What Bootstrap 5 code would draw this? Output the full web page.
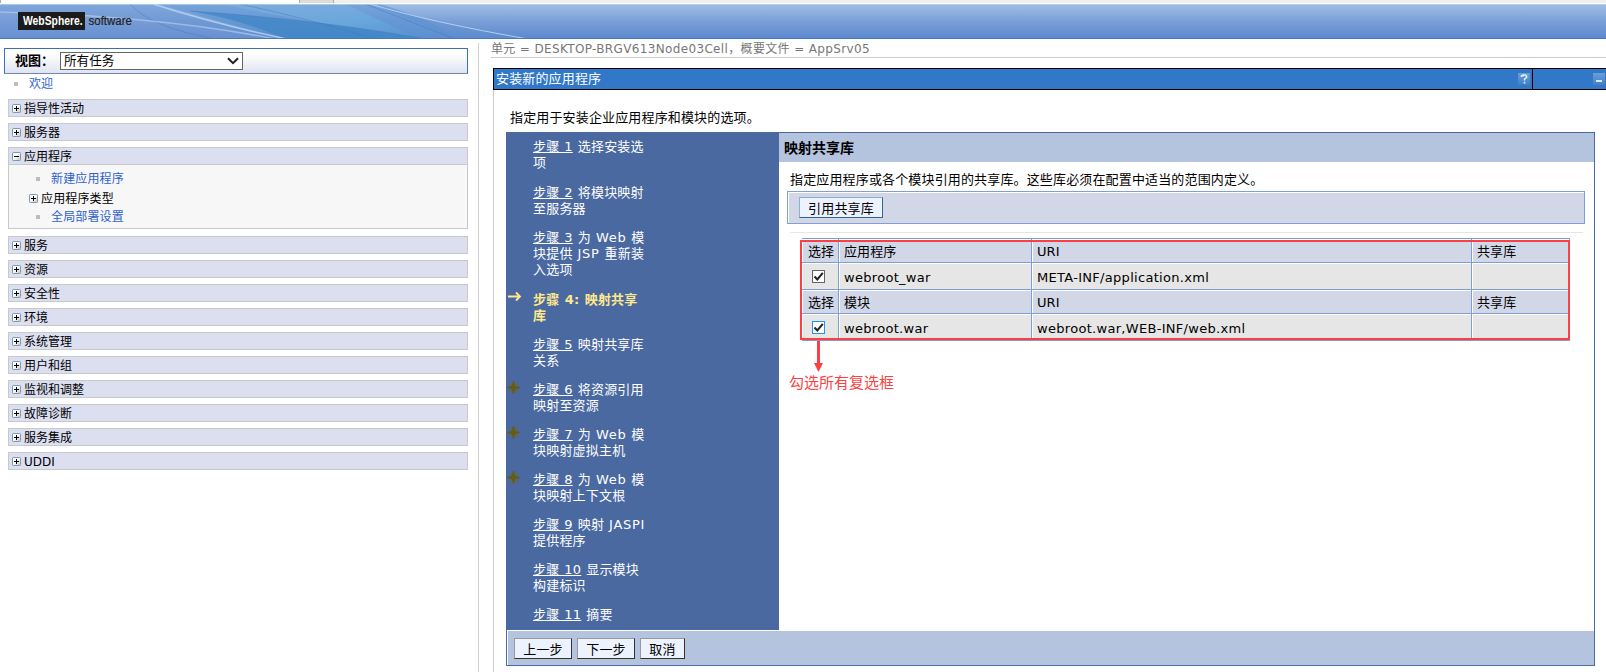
<!DOCTYPE html>
<html lang="zh-CN">
<head>
  <meta charset="UTF-8" />
  <meta name="viewport" content="width=device-width, initial-scale=1.0"/>
  <title>WebSphere software</title>

  <!-- Bootstrap CSS -->
  <link
    href="https://cdn.jsdelivr.net/npm/bootstrap@5.3.0/dist/css/bootstrap.min.css"
    rel="stylesheet"
  />

  <style>
    /* Global styling & layout */
    body {
      font-family: "DejaVu Sans", "Noto Sans CJK SC", sans-serif;
      font-size: 12.6px;
      line-height: 16px;
      color: #000;
      background: #fff;
      height: 672px;
      overflow: hidden;
    }
    svg {
      display: block;
      flex: none;
    }

    /* Browser tab strip */
    .tab-strip {
      height: 3px;
      background: #efefef;
    }
    .tab-active {
      width: 300px;
      background: #fff;
      border-left: 1px solid #aaa;
      border-right: 1px solid #aaa;
    }
    .tab-next {
      width: 34px;
      background: #dcdcdc;
      border-right: 1px solid #aaa;
    }

    /* Product banner */
    .banner {
      height: 35px;
      margin-top: 1px;
    }

    /* Columns below the banner fill the rest of the window */
    .columns {
      height: 633px;
    }

    /* Navigation tree */
    .side {
      width: 479px;
      margin-top: 4px;
      padding: 5px 10px 0 4px;
      border-right: 1px solid #d0d0d0;
      font-size: 12px;
    }
    .view-box {
      height: 26px;
      padding-left: 10px;
      border: 1px solid #3a6fb0;
      border-bottom-color: #7189b0;
      background: linear-gradient(#fff 20%, #e0e3f2);
    }
    .view-label {
      width: 45px;
      font-size: 13px;
      font-weight: 700;
      white-space: nowrap;
    }
    .view-select {
      width: 183px;
      height: 18px;
      padding: 0 3px;
      border: 1px solid #666;
      background: #fff;
      font-size: 12.6px;
    }
    .side a {
      color: #2f62cc;
    }
    .dot {
      width: 4px;
      height: 4px;
      background: #bcbcbc;
      flex: none;
    }
    .welcome {
      height: 19px;
      padding-left: 10px;
      gap: 11px;
    }
    .tree {
      margin: 6px 0 0 4px;
    }
    .tree-item {
      height: 18px;
      padding: 1px 0 0 3px;
      gap: 3px;
      margin-bottom: 6px;
      border: 1px solid #c9c9cc;
      background: #dcdff0;
    }
    .tree-item svg {
      margin-top: -1px;
    }
    .tree-body {
      height: 64px;
      margin: -6px 0 7px;
      padding: 4px 0 0 20px;
      border: 1px solid #c9c9cc;
      border-top: 0;
      background: #f7f7f7;
      letter-spacing: 0.15px;
    }
    .tree-leaf {
      height: 19px;
      gap: 11px;
      padding-left: 7px;
    }
    .tree-leaf.branch {
      gap: 3px;
      padding: 2px 0 0;
    }

    /* Work area */
    .work {
      padding-left: 12px;
    }
    .crumb {
      height: 19px;
      padding-top: 3px;
      line-height: 15px;
      color: #777;
      font-size: 12px;
      letter-spacing: 0.35px;
      border-bottom: 1px solid #ccc;
    }
    .portlet {
      height: 605px;
      margin: 10px 0 0 2px;
      border-left: 1px solid #ccc;
    }
    .portlet-title {
      height: 22px;
      margin-left: -1px;
      border: 1px solid #000;
      border-right: 0;
      background: #3178c8;
      color: #fff;
      font-size: 13px;
      letter-spacing: 0.15px;
      padding-left: 2px;
    }
    .help-btn {
      margin-right: 2px;
    }
    .title-end {
      width: 74px;
      border-left: 1px solid #000;
    }
    .intro {
      height: 42px;
      padding: 20px 0 0 16px;
      font-size: 13px;
      letter-spacing: 0.15px;
    }

    /* Wizard */
    .wizard {
      width: 1089px;
      height: 534px;
      margin-left: 12px;
      border: 1px solid #4a69a1;
    }
    .steps {
      width: 272px;
      padding: 6px 0 0;
      background: #4a69a1;
      color: #fff;
      font-size: 13px;
      letter-spacing: 0.2px;
      word-spacing: 0.6px;
    }
    .step {
      margin-bottom: 13px;
      white-space: nowrap;
    }
    .step:first-child,
    .step:nth-child(3) {
      margin-bottom: 14px;
    }
    .step-icon {
      width: 26px;
      margin-top: -1px;
      flex: none;
    }
    .step a {
      color: #fff;
      text-decoration: underline;
    }
    .step b {
      color: #ffe88c;
    }
    .latin {
      letter-spacing: 0.7px;
    }
    .panel-title {
      height: 29px;
      padding: 1px 0 0 5px;
      background: #b4c4de;
      font-size: 14px;
      font-weight: 700;
    }
    .panel-text {
      height: 29px;
      padding: 10px 0 0 11px;
      font-size: 13px;
      letter-spacing: 0.15px;
    }
    .tool-row {
      height: 33px;
      width: 798px;
      margin-left: 8px;
      padding-left: 11px;
      border: 1px solid #829fd5;
      background: #d1d7e7;
      box-shadow: inset 1px 1px #fff;
    }
    .was-btn {
      width: 58px;
      height: 21px;
      padding: 1px 0 0;
      border: 1px solid #999;
      border-right-color: #333;
      border-bottom-color: #333;
      background: #edf2ff;
      color: #000;
      font-size: 13px;
      letter-spacing: 0.2px;
      line-height: 17px;
      white-space: nowrap;
    }
    .was-btn.narrow {
      width: 45px;
    }
    .was-btn.blue {
      width: 84px;
      border-color: #8bb0d8 #336699 #336699 #8bb0d8;
    }
    .rule {
      height: 1px;
      margin: 8px 11px 5px;
      background: #e6e6e6;
    }
    .map-area {
      width: 768px;
      margin-left: 23px;
    }
    .map-table {
      width: 768px;
      table-layout: fixed;
      border-collapse: separate;
      border-spacing: 0;
      border-top: 1px solid #7f9fd4;
      font-size: 13px;
    }
    .map-table td,
    .map-table th {
      padding: 3px 0 0 5px;
      height: 27px;
      border-right: 1px solid #7f9fd4;
      border-bottom: 1px solid #7f9fd4;
      background: #e6e6e6;
      box-shadow: inset 1px 1px #fff;
      font-weight: 400;
      letter-spacing: 0.3px;
      white-space: nowrap;
    }
    .map-table th {
      height: 24px;
      background: #d1d7e7;
      letter-spacing: 0.1px;
    }
    .map-table th:first-child {
      padding-left: 6px;
    }
    .tick {
      width: 13px;
      height: 13px;
      margin: -2px 0 0 5px;
      border: 1px solid #666;
      background: #fff;
    }
    .tick.focus {
      border-color: #1c97ea;
    }
    /* Annotation drawn over the table */
    .callout {
      position: absolute;
      left: -2px;
      top: 2px;
      width: 770px;
      height: 100px;
      border: 2px solid #fb3f43;
    }
    .callout-text {
      margin: 1px 0 0 -13px;
      color: #fb3f43;
      font-size: 15px;
      line-height: 20px;
    }
    .wizard-foot {
      height: 35px;
      padding: 2px 0 0 7px;
      gap: 5px;
      background: #b4c4de;
      box-shadow: inset 1px 1px #fff;
    }
  </style>
</head>
<body>
  <svg width="0" height="0" class="position-absolute">
    <defs>
      <linearGradient id="box" x1="0" y1="0" x2="1" y2="1">
        <stop offset=".4" stop-color="#fff"/><stop offset="1" stop-color="#c8c4b8"/>
      </linearGradient>
      <linearGradient id="btn" x1="0" y1="0" x2="0" y2="1">
        <stop offset="0" stop-color="#6a9fd8"/><stop offset="1" stop-color="#3f80c6"/>
      </linearGradient>
      <symbol id="plus" viewBox="0 0 9 9">
        <rect x=".5" y=".5" width="8" height="8" rx=".8" fill="url(#box)" stroke="#7898b5"/>
        <path d="M2 4.5h5M4.5 2v5" stroke="#000"/>
      </symbol>
      <symbol id="minus" viewBox="0 0 9 9">
        <rect x=".5" y=".5" width="8" height="8" rx=".8" fill="url(#box)" stroke="#7898b5"/>
        <path d="M2 4.5h5" stroke="#000"/>
      </symbol>
      <symbol id="check" viewBox="0 0 11 11">
        <path d="M1.5 5.5 4.3 8.4 9.8 1.8" fill="none" stroke="#222" stroke-width="2"/>
      </symbol>
      <symbol id="star" viewBox="0 0 13 13">
        <path d="M2 2h2v2H2zM9 2h2v2H9zM2 9h2v2H2zM9 9h2v2H9z" fill="#66664c"/>
        <path d="M6 0h1l1 4 1 1 4 1v1L9 8 8 9l-1 4H6L5 9 4 8 0 7V6l4-1 1-1z" fill="#665c12"/>
      </symbol>
    </defs>
  </svg>

  <!-- Tab strip -->
  <div class="tab-strip d-flex">
    <div class="tab-active"></div>
    <div class="tab-next"></div>
  </div>

  <!-- Banner -->
  <header class="banner">
    <svg width="1606" height="35" viewBox="0 0 1606 35">
      <defs>
        <linearGradient id="sky" x1="0" y1="0" x2="0" y2="1">
          <stop offset="0" stop-color="#a0bfe7"/><stop offset=".5" stop-color="#7a9fd7"/><stop offset="1" stop-color="#5a89ce"/>
        </linearGradient>
        <linearGradient id="glow" x1="0" y1="0" x2="1" y2="1">
          <stop offset="0" stop-color="#8fb9e2" stop-opacity=".3"/><stop offset=".6" stop-color="#69aadd"/><stop offset="1" stop-color="#5b93d2"/>
        </linearGradient>
      </defs>
      <rect width="1606" height="35" fill="url(#sky)"/>
      <path d="M0 8Q150 12 285 35H0z" fill="#7398d5" opacity=".5"/>
      <path d="M0 0H155L275 35Q140 9 0 8z" fill="#6794d1" opacity=".55"/>
      <path d="M155 0H380Q440 18 455 35H287Z" fill="#5a93d2" opacity=".6"/>
      <path d="M220 0H345L415 33Q330 22 220 0z" fill="url(#glow)" opacity=".85"/>
      <path d="M190 7Q320 16 420 34L375 35H285Q240 15 190 7z" fill="#3c84c5" opacity=".7"/>
      <path d="M370 0Q430 18 530 35H455Q420 18 370 0z" fill="#5f8fd0" opacity=".4"/>
      <path d="M190 7Q320 16 420 34M365 0 455 35M240 0Q310 15 375 35M130 0Q150 23 215 35" fill="none" stroke="#4279b6" stroke-opacity=".45"/>
      <path d="M0 8Q160 12 275 35" fill="none" stroke="#b4cdec" stroke-opacity=".65" stroke-width="1.5"/>
      <path d="M153 0Q215 20 287 35" fill="none" stroke="#bdd8f2" stroke-opacity=".8" stroke-width="1.6"/>
      <path d="M370 0Q430 18 528 35" fill="none" stroke="#b6cfed"/>
      <path d="M0 .5h1606" stroke="#b9d3f1" stroke-opacity=".7"/>
      <path d="M0 34.5h1606" stroke="#477ac0"/>
      <rect x="18" y="8" width="67" height="18" fill="#1b1b1b"/>
      <text transform="translate(23 21) scale(.83 1)" font-family="Liberation Sans, sans-serif" font-size="12.5" font-weight="700" fill="#fff">WebSphere.</text>
      <text transform="translate(88.5 21) scale(.92 1)" font-family="Liberation Sans, sans-serif" font-size="12.5" fill="#222" stroke="#222" stroke-width=".2">software</text>
    </svg>
  </header>

  <div class="columns d-flex overflow-hidden">
    <!-- Navigation -->
    <nav class="side flex-shrink-0">
      <div class="view-box d-flex align-items-center">
        <span class="view-label">视图：</span>
        <div class="view-select d-flex align-items-center justify-content-between">
          <span>所有任务</span>
          <svg width="12" height="8" viewBox="0 0 12 8"><path d="M1 1.2 6 6.2 11 1.2" fill="none" stroke="#222" stroke-width="2"/></svg>
        </div>
      </div>
      <div class="welcome d-flex align-items-center"><i class="dot"></i><a class="text-decoration-none" href="#">欢迎</a></div>

      <div class="tree">
        <div class="tree-item d-flex align-items-center"><svg width="9" height="9"><use href="#plus"/></svg>指导性活动</div>
        <div class="tree-item d-flex align-items-center"><svg width="9" height="9"><use href="#plus"/></svg>服务器</div>
        <div class="tree-item d-flex align-items-center"><svg width="9" height="9"><use href="#minus"/></svg>应用程序</div>
        <div class="tree-body">
          <div class="tree-leaf d-flex align-items-center"><i class="dot"></i><a class="text-decoration-none" href="#">新建应用程序</a></div>
          <div class="tree-leaf branch d-flex align-items-center"><svg width="9" height="9"><use href="#plus"/></svg>应用程序类型</div>
          <div class="tree-leaf d-flex align-items-center"><i class="dot"></i><a class="text-decoration-none" href="#">全局部署设置</a></div>
        </div>
        <div class="tree-item d-flex align-items-center"><svg width="9" height="9"><use href="#plus"/></svg>服务</div>
        <div class="tree-item d-flex align-items-center"><svg width="9" height="9"><use href="#plus"/></svg>资源</div>
        <div class="tree-item d-flex align-items-center"><svg width="9" height="9"><use href="#plus"/></svg>安全性</div>
        <div class="tree-item d-flex align-items-center"><svg width="9" height="9"><use href="#plus"/></svg>环境</div>
        <div class="tree-item d-flex align-items-center"><svg width="9" height="9"><use href="#plus"/></svg>系统管理</div>
        <div class="tree-item d-flex align-items-center"><svg width="9" height="9"><use href="#plus"/></svg>用户和组</div>
        <div class="tree-item d-flex align-items-center"><svg width="9" height="9"><use href="#plus"/></svg>监视和调整</div>
        <div class="tree-item d-flex align-items-center"><svg width="9" height="9"><use href="#plus"/></svg>故障诊断</div>
        <div class="tree-item d-flex align-items-center"><svg width="9" height="9"><use href="#plus"/></svg>服务集成</div>
        <div class="tree-item d-flex align-items-center"><svg width="9" height="9"><use href="#plus"/></svg>UDDI</div>
      </div>
    </nav>

    <!-- Work area -->
    <main class="work flex-grow-1">
      <div class="crumb">单元 = DESKTOP-BRGV613Node03Cell，概要文件 = AppSrv05</div>

      <div class="portlet">
        <div class="portlet-title d-flex">
          <div class="flex-grow-1 d-flex align-items-center justify-content-between">
            <span>安装新的应用程序</span>
            <svg class="help-btn" width="12" height="12" viewBox="0 0 12 12"><rect width="12" height="12" fill="url(#btn)"/><path d="M3.500 4V2.800H5V2h2.500l1 1v1.500L6.500 6.200V7.500M6.500 8.700v1.800" fill="none" stroke="#e0edfb" stroke-width="1.600"/></svg>
          </div>
          <div class="title-end d-flex align-items-center justify-content-end">
            <svg width="13" height="12" viewBox="0 0 13 12"><rect width="12" height="12" fill="url(#btn)"/><path d="M3 8h6" stroke="#d9eafb" stroke-width="2"/></svg>
          </div>
        </div>

        <div class="intro">指定用于安装企业应用程序和模块的选项。</div>

        <div class="wizard d-flex flex-column">
          <div class="d-flex flex-grow-1">
            <!-- Steps -->
            <div class="steps flex-shrink-0">
              <div class="step d-flex"><span class="step-icon"></span><div><a href="#">步骤 1</a> 选择安装选<br>项</div></div>
              <div class="step d-flex"><span class="step-icon"></span><div><a href="#">步骤 2</a> 将模块映射<br>至服务器</div></div>
              <div class="step d-flex"><span class="step-icon"></span><div><a href="#">步骤 3</a> 为 <span class="latin">Web</span> 模<br>块提供 <span class="latin">JSP</span> 重新装<br>入选项</div></div>
              <div class="step d-flex">
                <span class="step-icon"><svg width="16" height="13" viewBox="0 0 16 13"><path d="M1 5.500h12M9 1.500l4 4-4 4" fill="none" stroke="#ffe88c" stroke-width="1.800"/></svg></span>
                <div><b>步骤 4: 映射共享<br>库</b></div>
              </div>
              <div class="step d-flex"><span class="step-icon"></span><div><a href="#">步骤 5</a> 映射共享库<br>关系</div></div>
              <div class="step d-flex"><span class="step-icon"><svg width="13" height="13"><use href="#star"/></svg></span><div><a href="#">步骤 6</a> 将资源引用<br>映射至资源</div></div>
              <div class="step d-flex"><span class="step-icon"><svg width="13" height="13"><use href="#star"/></svg></span><div><a href="#">步骤 7</a> 为 <span class="latin">Web</span> 模<br>块映射虚拟主机</div></div>
              <div class="step d-flex"><span class="step-icon"><svg width="13" height="13"><use href="#star"/></svg></span><div><a href="#">步骤 8</a> 为 <span class="latin">Web</span> 模<br>块映射上下文根</div></div>
              <div class="step d-flex"><span class="step-icon"></span><div><a href="#">步骤 9</a> 映射 <span class="latin">JASPI</span><br>提供程序</div></div>
              <div class="step d-flex"><span class="step-icon"></span><div><a href="#">步骤 10</a> 显示模块<br>构建标识</div></div>
              <div class="step d-flex mb-0"><span class="step-icon"></span><div><a href="#">步骤 11</a> 摘要</div></div>
            </div>

            <!-- Step content -->
            <div class="flex-grow-1">
              <div class="panel-title d-flex align-items-center">映射共享库</div>
              <div class="panel-text">指定应用程序或各个模块引用的共享库。这些库必须在配置中适当的范围内定义。</div>
              <div class="tool-row d-flex align-items-center">
                <button type="button" class="was-btn blue">引用共享库</button>
              </div>
              <div class="rule"></div>
              <div class="map-area position-relative">
                <table class="map-table">
                  <colgroup><col width="37"><col width="193"><col width="440"><col width="98"></colgroup>
                  <tr><th>选择</th><th>应用程序</th><th>URI</th><th>共享库</th></tr>
                  <tr>
                    <td><div class="tick"><svg width="11" height="11"><use href="#check"/></svg></div></td>
                    <td>webroot_war</td><td>META-INF/application.xml</td><td></td>
                  </tr>
                  <tr><th>选择</th><th>模块</th><th>URI</th><th>共享库</th></tr>
                  <tr>
                    <td><div class="tick focus"><svg width="11" height="11"><use href="#check"/></svg></div></td>
                    <td>webroot.war</td><td>webroot.war,WEB-INF/web.xml</td><td></td>
                  </tr>
                </table>
                <div class="callout"></div>
                <svg class="ms-2" width="17" height="31" viewBox="0 0 17 31"><path d="M8.500 0v24" stroke="#fb3f43" stroke-width="3"/><path d="M4 22h9l-4.500 9z" fill="#fb3f43"/></svg>
                <div class="callout-text">勾选所有复选框</div>
              </div>
            </div>
          </div>

          <div class="wizard-foot d-flex align-items-center">
            <button type="button" class="was-btn">上一步</button>
            <button type="button" class="was-btn">下一步</button>
            <button type="button" class="was-btn narrow">取消</button>
          </div>
        </div>
      </div>
    </main>
  </div>

  <!-- Bootstrap JS -->
  <script src="https://cdn.jsdelivr.net/npm/bootstrap@5.3.0/dist/js/bootstrap.bundle.min.js"></script>
</body>
</html>
